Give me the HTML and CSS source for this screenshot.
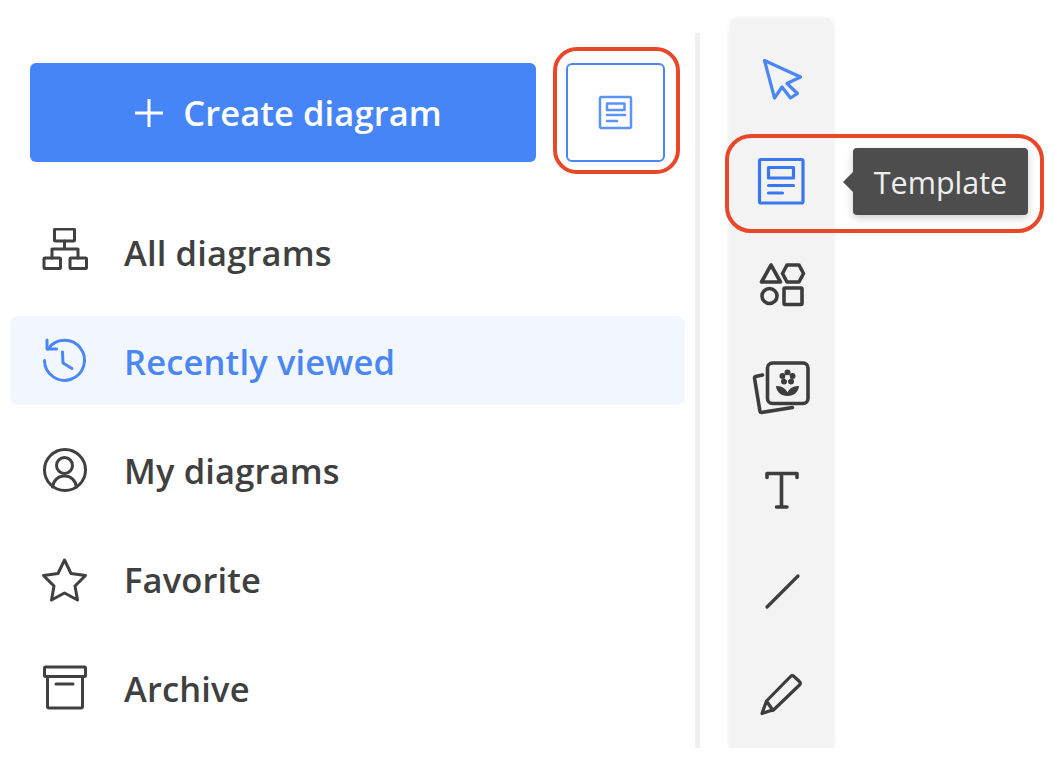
FILE: index.html
```html
<!DOCTYPE html>
<html lang="en">
<head>
<meta charset="utf-8">
<title>Create diagram</title>
<link rel="stylesheet" href="styles.css">
</head>
<body>
<div class="app">
  <aside class="sidebar">
    <div class="actions">
      <button class="create"><svg class="plus" viewBox="134 99 30 30"><path d="M149 100v28M135 114h28"/></svg><span>Create diagram</span></button>
      <button class="template-btn"><svg class="i-34" viewBox="598 95 35 35"><rect x="600" y="97" width="31" height="31" rx="1.5"/><rect x="607" y="103.500" width="17.500" height="6.500"/><path d="M607 115h18M607 121h10"/></svg></button>
    </div>
    <nav class="nav">
      <a class="row"><svg class="nav-icon" viewBox="41 230 48 48"><rect x="54.500" y="231" width="20" height="12" rx="1"/><rect x="44" y="260" width="16.500" height="10.500" rx="1"/><rect x="70" y="260" width="16.500" height="10.500" rx="1"/><path d="M64.500 243v8M52 260v-9h26v9"/></svg><span>All diagrams</span></a>
      <a class="row active"><svg class="nav-icon" viewBox="41 337 48 48"><path d="M48 349A20 20 0 1 1 44.500 360.500"/><path d="M47 340v9h9.500M62.500 352l.5 11 9 5.500"/></svg><span>Recently viewed</span></a>
      <a class="row"><svg class="nav-icon" viewBox="41 446 48 48"><circle cx="65" cy="470" r="20.500"/><circle cx="64.500" cy="465.500" r="8"/><path d="M52.500 487c1-7 6-11 12-11s11 4 12 11"/></svg><span>My diagrams</span></a>
      <a class="row"><svg class="nav-icon" viewBox="41 555 48 48"><path d="M64.500 560l6.500 13.500 14.500 2-10.500 10.500 2.500 14-13-7-13 7 2.500-14-10.500-10.500 14.500-2z"/></svg><span>Favorite</span></a>
      <a class="row"><svg class="nav-icon" viewBox="41 665 48 48"><rect x="44.500" y="668" width="41" height="9.500" rx="1"/><path d="M47.500 677.500v30a1.500 1.500 0 0 0 1.500 1.500h32a1.500 1.500 0 0 0 1.500-1.500v-30M56 685h17"/></svg><span>Archive</span></a>
    </nav>
  </aside>
  <div class="divider"></div>
  <div class="toolbar">
    <button class="tool"><svg class="tool-icon blue" viewBox="752 49 60 60"><path d="M764.500 60.500l36 16.500-13.500 6.500 10.500 10-7 4.500-8.500-11-7.500 11z"/></svg></button>
    <button class="tool"><svg class="tool-icon strong" viewBox="752 151 60 60"><rect x="759.500" y="159.500" width="43.500" height="43.500" rx="1.500"/><rect x="768.500" y="167.500" width="25" height="10.500"/><path d="M768.500 185.500h25M768.500 193h14"/></svg></button>
    <button class="tool"><svg class="tool-icon heavy" viewBox="752 254 60 60"><path d="M771 265l-9.500 17h19zM787 265h12l4.500 8.500-4.500 8.500h-12l-4.500-8.500z"/><circle cx="769.500" cy="296" r="7.500"/><rect x="784" y="288" width="18" height="16.500" rx="1"/></svg></button>
    <button class="tool"><svg class="tool-icon heavy" viewBox="752 356 60 60"><rect x="767.500" y="363" width="40.500" height="40.500" rx="5"/><path d="M762.500 375l-7 1.500a1.500 1.500 0 0 0-1 1.500l5.500 33.500a1.500 1.500 0 0 0 1.500 1l31-5"/><g class="fill"><circle cx="787.500" cy="372.500" r="3"/><circle cx="782.500" cy="376" r="3"/><circle cx="792.500" cy="376" r="3"/><circle cx="784" cy="381.500" r="3"/><circle cx="791" cy="381.500" r="3"/><path d="M776 386c6-.5 10 3 11.500 6.500 1.500-3.500 5.500-7 11.500-6.500-.5 6-5 10-11.500 10s-11-4-11.500-10z"/></g><circle class="hole" cx="787.500" cy="377.500" r="2.500"/></svg></button>
    <button class="tool"><svg class="tool-icon heavy" viewBox="752 458 60 60"><path d="M767 477.500v-4h30v4M781.500 473.500v33M776.500 507h10.500"/></svg></button>
    <button class="tool"><svg class="tool-icon" viewBox="752 561 60 60"><path d="M767 607l31-31"/></svg></button>
    <button class="tool"><svg class="tool-icon" viewBox="752 663 60 60"><path d="M762 713.500l4.500-12.500 24-24.500a2.500 2.500 0 0 1 3.500 0l5.500 5a2.500 2.500 0 0 1 0 3.500l-25.500 24.500zM766.500 701l6.500 9.500"/></svg></button>
  </div>
</div>
<div class="ring ring-a"></div>
<div class="ring ring-b"></div>
<div class="tooltip">Template</div>
</body>
</html>
```

FILE: styles.css
```css
html, body {
  margin: 0;
  padding: 0;
  background: #fff;
  font-family: "Open Sans", "Liberation Sans", sans-serif;
}

.app {
  display: flex;
  height: 748px;
  overflow: hidden;
  background: #fff;
}

.sidebar {
  width: 695px;
  flex: none;
  padding: 63px 10px 0;
  box-sizing: border-box;
}

.actions {
  display: flex;
  gap: 30px;
  padding-left: 20px;
}

button {
  font: inherit;
  padding: 0;
  border: 0;
  background: none;
}

.create {
  width: 506px;
  height: 99px;
  box-sizing: border-box;
  padding-left: 10px;
  display: flex;
  align-items: center;
  justify-content: center;
  gap: 19px;
  border-radius: 6px;
  background: #4685f8;
  color: #fff;
  font-size: 34.5px;
  font-weight: 600;
  letter-spacing: .1px;
}

.plus {
  width: 30px;
  height: 30px;
  fill: none;
  stroke: #fff;
  stroke-width: 3;
}

.template-btn {
  width: 99px;
  height: 99px;
  box-sizing: border-box;
  border: 2px solid #4a87f5;
  border-radius: 6px;
  background: #fff;
  display: flex;
  align-items: center;
  justify-content: center;
}

.i-34 {
  width: 35px;
  height: 35px;
  fill: none;
  stroke: #5b93f7;
  stroke-width: 2.5;
  stroke-linecap: round;
  stroke-linejoin: round;
}

.nav {
  display: flex;
  flex-direction: column;
  gap: 20px;
  margin-top: 45px;
}

.row {
  height: 89px;
  width: 675px;
  display: flex;
  align-items: center;
  gap: 35px;
  padding-left: 31px;
  box-sizing: border-box;
  border-radius: 8px;
  color: #404040;
  font-size: 34.5px;
  font-weight: 600;
  letter-spacing: .15px;
}

.row span {
  position: relative;
  top: 1px;
}

.row.active {
  background: #f2f7ff;
  color: #4a87f5;
}

.nav-icon {
  width: 48px;
  height: 48px;
  flex: none;
  fill: none;
  stroke: currentColor;
  stroke-width: 3;
  stroke-linejoin: round;
  stroke-linecap: round;
}

.divider {
  width: 5px;
  flex: none;
  margin-top: 33px;
  background: #f0f0f0;
}

.toolbar {
  width: 103px;
  flex: none;
  margin: 18px 0 0 30px;
  padding-top: 10px;
  background: #f3f3f3;
  border-radius: 8px 8px 0 0;
  box-shadow: 0 1px 5px rgba(0, 0, 0, .1);
  display: flex;
  flex-direction: column;
}

.tool {
  height: 102.33px;
  flex: none;
  display: flex;
  align-items: center;
  justify-content: center;
}

.tool-icon {
  width: 60px;
  height: 60px;
  fill: none;
  stroke: #3d3d3d;
  stroke-width: 3.2;
  stroke-linejoin: round;
  stroke-linecap: round;
}

.tool-icon.heavy {
  stroke-width: 3.6;
}

.tool-icon.blue {
  stroke: #4a87f5;
}

.tool-icon.strong {
  stroke: #3b78ee;
}

.fill {
  fill: #3d3d3d;
  stroke: none;
}

.hole {
  fill: #f3f3f3;
  stroke: none;
}

.ring {
  position: absolute;
  box-sizing: border-box;
  border: 4px solid #e8472a;
}

.ring-a {
  left: 553px;
  top: 47px;
  width: 127px;
  height: 127px;
  border-radius: 24px;
}

.ring-b {
  left: 725px;
  top: 134px;
  width: 319px;
  height: 99px;
  border-radius: 26px;
}

.tooltip {
  position: absolute;
  left: 853px;
  top: 148px;
  width: 175px;
  height: 67px;
  box-sizing: border-box;
  display: flex;
  align-items: center;
  justify-content: center;
  border-radius: 4px;
  background: #4d4d4d;
  color: #eee;
  font-size: 30.5px;
  box-shadow: 0 3px 8px rgba(0, 0, 0, .2);
}

.tooltip::before {
  content: "";
  position: absolute;
  left: -10px;
  top: 24px;
  border-style: solid;
  border-width: 10px 10px 10px 0;
  border-color: transparent #4d4d4d transparent transparent;
}
```
